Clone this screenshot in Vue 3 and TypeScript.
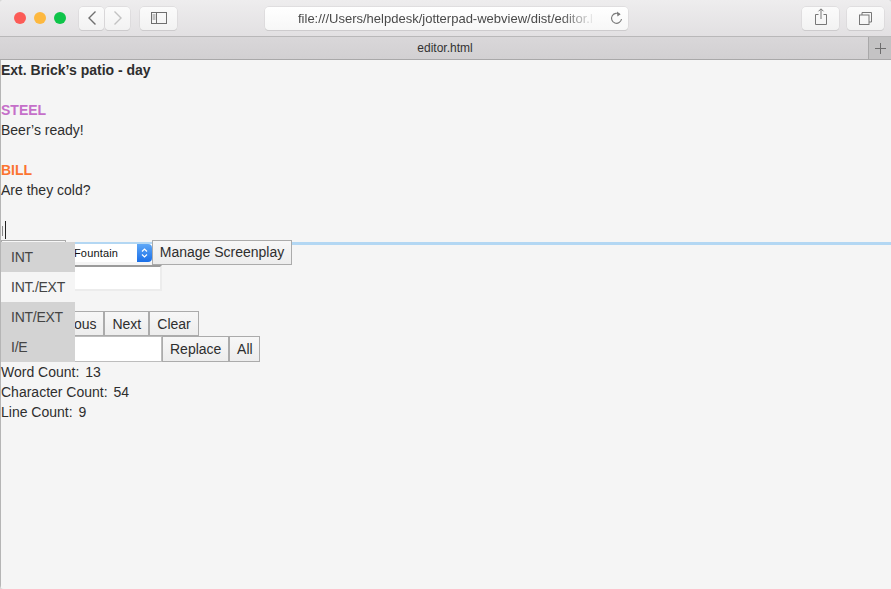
<script setup lang="ts">
const lines = [
  { text: "Ext. Brick’s patio - day", kind: "heading" },
  { text: "", kind: "" },
  { text: "STEEL", kind: "steel" },
  { text: "Beer’s ready!", kind: "" },
  { text: "", kind: "" },
  { text: "BILL", kind: "bill" },
  { text: "Are they cold?", kind: "" },
  { text: "", kind: "" },
];
const menu = [
  { text: "INT", active: true },
  { text: "INT./EXT", active: false },
  { text: "INT/EXT", active: true },
  { text: "I/E", active: true },
];
const counts = [
  { label: "Word Count:", value: "13" },
  { label: "Character Count:", value: "54" },
  { label: "Line Count:", value: "9" },
];
</script>

<template>
  <div class="window">
    <header class="toolbar">
      <div class="lights">
        <span class="light red"></span>
        <span class="light yellow"></span>
        <span class="light green"></span>
      </div>
      <div class="nav">
        <span class="tbtn nav-btn">
          <svg width="10" height="16" viewBox="0 0 10 16"><path d="M8.5 1.5 2 8l6.5 6.5" fill="none" stroke="#6f6f6f" stroke-width="1.4"/></svg>
        </span>
        <span class="tbtn nav-btn">
          <svg width="10" height="16" viewBox="0 0 10 16"><path d="M1.5 1.5 8 8l-6.5 6.5" fill="none" stroke="#c2c2c2" stroke-width="1.4"/></svg>
        </span>
      </div>
      <span class="tbtn side-btn">
        <svg width="16" height="12" viewBox="0 0 16 12"><rect x=".5" y=".5" width="15" height="11" fill="none" stroke="#6f6f6f"/><path d="M5.5 0v12" stroke="#6f6f6f"/><path d="M1.5 3h3M1.5 5h3M1.5 7h3" stroke="#8a8a8a"/></svg>
      </span>
      <div class="address">
        <span class="url">file:///Users/helpdesk/jotterpad-webview/dist/editor.l</span>
        <svg class="reload" width="13" height="14" viewBox="0 0 13 14"><path d="M9.9 3.6A5 5 0 1 0 11.5 8" fill="none" stroke="#7a7a7a" stroke-width="1.1"/><path d="M7 .5l3.6 2.7L7.4 5.6z" fill="#7a7a7a"/></svg>
      </div>
      <span class="tbtn end-btn share">
        <svg width="12" height="17" viewBox="0 0 12 17"><path d="M3.5 6.5H.5v10h11v-10h-3" fill="none" stroke="#777"/><path d="M6 11V1M3.5 3.3 6 .8l2.5 2.5" fill="none" stroke="#777"/></svg>
      </span>
      <span class="tbtn end-btn tabs">
        <svg width="13" height="13" viewBox="0 0 13 13"><rect x=".5" y="3" width="9.5" height="9.5" fill="none" stroke="#777"/><path d="M3 3V.5h9.5V10H10" fill="none" stroke="#777"/></svg>
      </span>
    </header>

    <div class="tabbar">
      <span class="tab-title">editor.html</span>
      <span class="new-tab">
        <svg width="11" height="11" viewBox="0 0 11 11"><path d="M5.5 0v11M0 5.5h11" stroke="#6d6d6d"/></svg>
      </span>
    </div>

    <main class="page">
      <section class="editor">
        <div v-for="(line, i) in lines" :key="i" class="line" :class="line.kind">{{ line.text }}</div>
        <div class="line"><span class="caret-mark"></span><span class="caret"></span></div>
      </section>

      <div class="controls">
        <button class="btn first"></button>
        <div class="select-wrap">
          <select class="format">
            <option>Fountain</option>
          </select>
          <span class="stepper">
            <svg width="7" height="12" viewBox="0 0 7 12"><path d="M1 4.5 3.5 2 6 4.5M1 7.5 3.5 10 6 7.5" fill="none" stroke="#fff" stroke-width="1.2"/></svg>
          </span>
        </div>
        <button class="btn manage">Manage Screenplay</button>
      </div>
      <div class="find-row"><input class="find" /></div>
      <div class="spacer"></div>
      <div class="button-row">
        <button class="btn previous">Previous</button>
        <button class="btn">Next</button>
        <button class="btn">Clear</button>
      </div>
      <div class="button-row">
        <input class="replace" />
        <button class="btn">Replace</button>
        <button class="btn all">All</button>
      </div>
      <div v-for="c in counts" :key="c.label" class="line">
        <span class="count-label">{{ c.label }}</span> {{ c.value }}
      </div>

      <ul class="menu">
        <li v-for="m in menu" :key="m.text" :class="{ active: m.active }">{{ m.text }}</li>
      </ul>
    </main>
  </div>
</template>

<style>
html, body { margin: 0; background: #d8d8d8; }
</style>

<style scoped>
.window {
  width: 891px;
  height: 589px;
  display: flex;
  flex-direction: column;
  overflow: hidden;
  position: relative;
  border-radius: 4px 4px 0 4px;
  font-family: "Liberation Sans", Arial, sans-serif;
  font-size: 14px;
  color: #2e2e2e;
  background: #f5f5f5;
}
.toolbar {
  height: 36px;
  flex: none;
  display: flex;
  align-items: center;
  background: linear-gradient(#eeedee, #e2e0e2);
  border-bottom: 1px solid #b9b8b9;
}
.lights { display: flex; gap: 8px; margin-left: 14px; }
.light { width: 12px; height: 12px; border-radius: 50%; }
.red { background: #fc5b57; }
.yellow { background: #fdb83f; }
.green { background: #0ec449; }
.tbtn {
  display: flex;
  align-items: center;
  justify-content: center;
  height: 23px;
  box-sizing: border-box;
  background: linear-gradient(#fbfbfb, #f2f2f2);
  border-radius: 4px;
  box-shadow: 0 0 0 .5px #d3d2d3, 0 1px 0 #c6c5c6;
}
.nav { display: flex; margin-left: 13px; gap: 1px; }
.nav-btn { width: 25px; }
.side-btn { width: 37px; margin-left: 10px; }
.address {
  width: 363px;
  height: 23px;
  margin-left: 88px;
  box-sizing: border-box;
  display: flex;
  align-items: center;
  position: relative;
  background: linear-gradient(#ffffff, #f7f7f7);
  border-radius: 4px;
  box-shadow: 0 0 0 .5px #d3d2d3, 0 1px 0 #c6c5c6;
  font-size: 13px;
  color: #4a4a4a;
}
.url {
  margin-left: 33px;
  width: 298px;
  white-space: nowrap;
  overflow: hidden;
  -webkit-mask-image: linear-gradient(90deg, #000 88%, transparent);
  mask-image: linear-gradient(90deg, #000 88%, transparent);
}
.reload { margin-left: 14px; }
.end-btn { width: 37px; }
.share { margin-left: 174px; }
.share svg { margin-top: -3px; }
.tabs { margin-left: 8px; }
.tabbar {
  height: 22px;
  flex: none;
  display: flex;
  align-items: center;
  background: linear-gradient(#d9d7d9, #d2d0d2);
  border-bottom: 1px solid #a9a8a9;
  position: relative;
}
.tab-title {
  flex: 1;
  text-align: center;
  padding-left: 22px;
  font-size: 12px;
  color: #333;
}
.new-tab {
  width: 22px;
  height: 22px;
  display: flex;
  align-items: center;
  justify-content: center;
  background: #c4c3c4;
  border-left: 1px solid #a9a8a9;
}
.page {
  flex: 1;
  position: relative;
  border-left: 1px solid #b5b5b5;
  box-sizing: border-box;
}
.editor {
  height: 182px;
  border-bottom: 3px solid #b3d7f3;
}
.line { height: 20px; line-height: 20px; white-space: nowrap; }
.heading { font-weight: 700; }
.steel { font-weight: 700; color: #c56fc9; }
.bill { font-weight: 700; color: #fb7431; }
.count-label { margin-right: 2px; }
.caret-mark {
  display: inline-block;
  width: 1px;
  height: 10px;
  background: #8a8a8a;
  margin-left: 1px;
  vertical-align: -1px;
}
.caret {
  display: inline-block;
  width: 1px;
  height: 18px;
  background: #222;
  margin-left: 2px;
  vertical-align: -4px;
}
.controls {
  display: flex;
  align-items: flex-start;
  height: 25px;
  margin-top: -5px;
  position: relative;
}
.btn {
  height: 25px;
  box-sizing: border-box;
  padding: 0 7px;
  border: 1px solid #ababab;
  border-radius: 0;
  background: linear-gradient(#f7f7f7, #ededed);
  font: 14px "Liberation Sans", Arial, sans-serif;
  color: #2e2e2e;
  white-space: nowrap;
}
.first { width: 65px; padding: 0; }
.manage { width: 140px; padding: 0 0 2px; }
.all { width: 31px; padding: 0; }
.select-wrap {
  position: relative;
  width: 83px;
  height: 18px;
  margin: 4px 0 0 3px;
  background: #fff;
}
.format {
  appearance: none;
  -webkit-appearance: none;
  width: 100%;
  height: 18px;
  display: block;
  box-sizing: border-box;
  padding: 0 0 0 5px;
  border: none;
  border-radius: 0;
  outline: none;
  background: transparent;
  font: 11px "Liberation Sans", Arial, sans-serif;
  letter-spacing: .15px;
  color: #111;
}
.stepper {
  position: absolute;
  right: 0;
  top: 0;
  width: 15px;
  height: 18px;
  display: flex;
  align-items: center;
  justify-content: center;
  background: linear-gradient(#5fa8f7, #1a6fe8);
  border-radius: 0 4px 4px 0;
}
.find-row { height: 26px; }
.find, .replace {
  height: 26px;
  box-sizing: border-box;
  margin: 0;
  padding: 0;
  background: #fff;
  border: 2px solid #ececec;
  border-top-color: #9b9b9b;
  display: block;
}
.find { width: 161px; }
.replace { width: 161px; border: 1px solid #bdbdbd; }
.spacer { height: 20px; }
.button-row { display: flex; height: 25px; }
.button-row + .button-row { height: 26px; }
.button-row + .button-row .btn { height: 26px; }
.previous { margin-left: 33px; }
.menu {
  position: absolute;
  left: 0;
  top: 182px;
  width: 74px;
  margin: 0;
  padding: 0;
  list-style: none;
  background: #f5f5f5;
  color: #444;
}
.menu li {
  height: 30px;
  line-height: 30px;
  padding-left: 10px;
  box-sizing: border-box;
  letter-spacing: -.25px;
}
.menu li.active { background: #d3d3d3; }
</style>
